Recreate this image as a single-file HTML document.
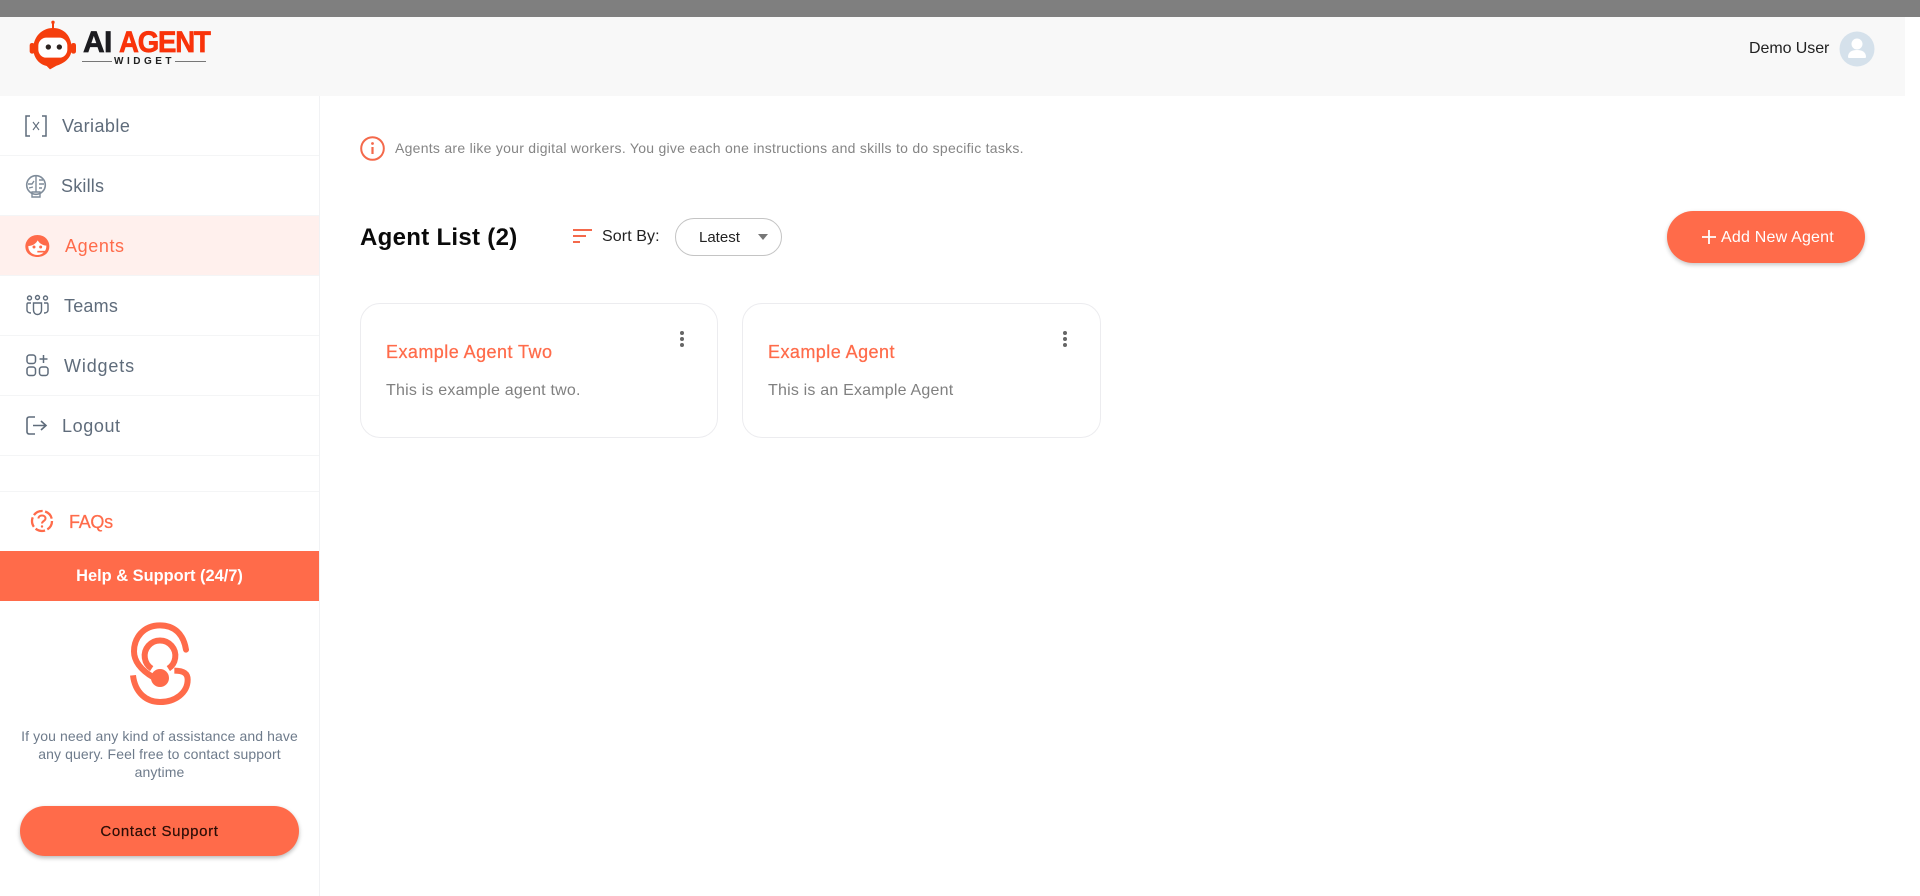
<!DOCTYPE html>
<html><head><meta charset="utf-8"><title>Agents</title>
<style>
html,body{margin:0;padding:0;width:1920px;height:896px;overflow:hidden;background:#fff}
body{font-family:"Liberation Sans",sans-serif;position:relative}
.a{position:absolute;white-space:nowrap}
.nav{font-size:18px;line-height:24px;color:#5f6c7b}
.line{position:absolute;left:0;width:319px;height:1px;background:#f4f5f6}
svg{position:absolute;overflow:visible}
.card{position:absolute;top:303px;width:356px;height:133px;border:1px solid #ececef;border-radius:20px;background:#fff}
.t{font-size:18px;line-height:24px;color:#ff6b4a;font-weight:500;letter-spacing:.45px;-webkit-text-stroke:.25px #ff6b4a}
.d{font-size:16px;line-height:22px;color:#808080;letter-spacing:.2px}
</style></head><body>
<div class="a" style="left:0;top:0;width:1920px;height:17px;background:#7f7f7f"></div>
<div class="a" style="left:0;top:17px;width:1905px;height:79px;background:#f8f8f8"></div>

<!-- logo -->
<svg style="left:25px;top:17px" width="60" height="55" viewBox="0 0 180 165">
<circle cx="84" cy="16" r="5" fill="#f53e0d"/><rect x="81" y="18" width="6" height="18" fill="#f53e0d"/>
<path d="M84 33C120 33 140 60 140 95C140 125 115 140 95 146L75 157L65 147C45 143 25 125 25 95C25 60 50 33 84 33z" fill="#f53e0d"/>
<rect x="14" y="78" width="15" height="32" rx="7" fill="#f53e0d"/><rect x="138" y="78" width="15" height="32" rx="7" fill="#f53e0d"/>
<rect x="40" y="62" width="87" height="60" rx="24" fill="#fff"/>
<circle cx="70" cy="90" r="8" fill="#2b2320"/><circle cx="103" cy="90" r="8" fill="#2b2320"/>
</svg>
<svg style="left:0;top:0" width="240" height="90" viewBox="0 0 240 90">
<rect x="82" y="61" width="30" height="1" fill="#777"/><rect x="175" y="61" width="31" height="1" fill="#777"/>
</svg>
<div class="a" style="left:83px;top:27px;font-size:30px;line-height:32px;font-weight:700;letter-spacing:-.7px;color:#1c1c20;-webkit-text-stroke:.7px #1c1c20">AI</div>
<div class="a" style="left:119px;top:27px;font-size:30px;line-height:32px;font-weight:700;letter-spacing:-1.3px;color:#f9330a;-webkit-text-stroke:.7px #f9330a;transform:scaleX(.92);transform-origin:0 50%">AGENT</div>
<div class="a" style="left:114px;top:56px;font-size:10px;line-height:12px;font-weight:700;letter-spacing:3.5px;color:#222">WIDGET</div>

<!-- user -->
<div class="a" style="left:1749px;top:38px;font-size:16px;line-height:22px;color:#222;letter-spacing:-.07px">Demo User</div>
<svg style="left:1839px;top:31px" width="36" height="36" viewBox="0 0 36 36">
<circle cx="18" cy="18" r="17.5" fill="#d5e1eb"/><circle cx="18" cy="13" r="5.5" fill="#fff"/>
<path d="M9 26c0-5 4-7 9-7s9 2 9 7c0 1-1 1-2 1H11c-1 0-2 0-2-1z" fill="#fff"/></svg>

<!-- sidebar -->
<div class="a" style="left:319px;top:96px;width:1px;height:800px;background:#f1f2f4"></div>
<div class="a" style="left:0;top:216px;width:319px;height:59px;background:#fff0ed"></div>
<div class="line" style="top:155px"></div><div class="line" style="top:215px"></div><div class="line" style="top:275px"></div><div class="line" style="top:335px"></div><div class="line" style="top:395px"></div><div class="line" style="top:455px"></div><div class="line" style="top:491px"></div>

<svg style="left:24px;top:114px" width="24" height="24" viewBox="0 0 24 24" fill="none" stroke="#5f6c7b" stroke-width="1.5">
<path d="M6 2H2v20h4M18 2h4v20h-4"/><path d="M9 8l6 8M15 8l-6 8" stroke-width="1.1"/></svg>
<div class="a nav" style="left:62px;top:114px;letter-spacing:.45px">Variable</div>

<svg style="left:25px;top:175px" width="22" height="23" viewBox="0 0 22 23" fill="none" stroke="#7f8c9a" stroke-width="1.6">
<circle cx="11" cy="10" r="9.300"/><path d="M11 1v16M7 17h8v5H7zM3 9h4l2-3M4 13l4-1M14 5h4M14 9h5M14 13h3" stroke-width="1.400"/></svg>
<div class="a nav" style="left:61px;top:174px;letter-spacing:.2px">Skills</div>

<svg style="left:25px;top:235px" width="25" height="22" viewBox="0 0 73 66">
<path d="M36 0C60 0 72 18 72 34C72 54 56 66 36 66C16 66 0 54 0 34C0 18 14 0 36 0z" fill="#ff6b4a"/>
<path d="M9 33C22 32 32 26 37 16C43 26 53 31 63 32C64 48 52 60 36 60C20 60 8 48 9 33z" fill="#fff"/>
<circle cx="26" cy="36" r="4.500" fill="#ff6b4a"/><circle cx="46" cy="36" r="4.500" fill="#ff6b4a"/>
<path d="M36 50H64" stroke="#ff6b4a" stroke-width="5" fill="none"/></svg>
<div class="a nav" style="left:65px;top:234px;color:#ff6b4a;letter-spacing:.6px">Agents</div>

<svg style="left:26px;top:295px" width="23" height="22" viewBox="0 0 23 22" fill="none" stroke="#5f6c7b" stroke-width="1.400">
<circle cx="3.500" cy="3" r="2"/><circle cx="11.500" cy="2.500" r="2"/><circle cx="19.500" cy="3" r="2"/>
<path d="M5 8H2C1 8 1 9 1 10v5c0 2 2 3 4 3M18 8h3c1 0 1 1 1 2v5c0 2-2 3-4 3M7.500 8h8v7c0 3-2 4.500-4 4.500s-4-1.500-4-4.500z"/></svg>
<div class="a nav" style="left:64px;top:294px;letter-spacing:.2px">Teams</div>

<svg style="left:26px;top:354px" width="23" height="23" viewBox="0 0 23 23" fill="none" stroke="#5f6c7b" stroke-width="1.500">
<rect x="1" y="1" width="8.500" height="8.500" rx="2.500"/><rect x="1" y="13" width="8.500" height="8.500" rx="2.500"/><rect x="13.500" y="13" width="8.500" height="8.500" rx="2.500"/><path d="M17.500 1v8M13.500 5h8"/></svg>
<div class="a nav" style="left:64px;top:354px;letter-spacing:.85px">Widgets</div>

<svg style="left:26px;top:416px" width="21" height="19" viewBox="0 0 21 19" fill="none" stroke="#5f6c7b" stroke-width="1.600">
<path d="M9 1H3C2 1 1 2 1 3v13c0 1 1 2 2 2h6M7 9.500h13M15 5l5 4.500-5 4.500"/></svg>
<div class="a nav" style="left:62px;top:414px;letter-spacing:.6px">Logout</div>

<svg style="left:30px;top:509px" width="24" height="24" viewBox="0 0 24 24" fill="none" stroke="#ff6b4a" stroke-width="2.300">
<circle cx="12" cy="12" r="10" stroke-dasharray="10 2.500"/><path d="M8.500 9.500c0-2 1.500-3 3.500-3s3.500 1 3.500 3c0 2.500-3.500 2.500-3.500 5" stroke-width="2"/><circle cx="12" cy="17.500" r="1.200" fill="#ff6b4a" stroke="none"/></svg>
<div class="a" style="left:69px;top:510px;font-size:18px;line-height:24px;color:#ff6b4a;letter-spacing:-.3px;-webkit-text-stroke:.25px #ff6b4a">FAQs</div>

<div class="a" style="left:0;top:551px;width:319px;height:50px;background:#ff6b4a;color:#fff;text-align:center;font-size:16.400px;font-weight:700;line-height:51px">Help &amp; Support (24/7)</div>

<svg style="left:125px;top:618px" width="70" height="90" viewBox="0 0 210 270" fill="none" stroke="#ff6b4a" stroke-width="18" stroke-linecap="round">
<path d="M183 95C175 45 145 22 105 22C55 22 27 60 27 100C27 135 55 160 85 178"/>
<path d="M80 152A46 46 0 1 1 130 152" stroke-linecap="butt"/>
<path d="M24 172C30 225 65 252 105 252C150 252 188 225 188 185C188 165 175 158 148 158" stroke-linecap="butt"/>
<circle cx="105" cy="180" r="27" fill="#ff6b4a" stroke="none"/></svg>

<div class="a" style="left:0;width:319px;top:727px;text-align:center;font-size:14px;line-height:18px;color:#6e7b8b;letter-spacing:.1px">If you need any kind of assistance and have<br>any query. Feel free to contact support<br>anytime</div>

<div class="a" style="left:20px;top:806px;width:279px;height:50px;border-radius:25px;background:#ff6b4a;box-shadow:0 2px 4px rgba(0,0,0,.28);text-align:center;line-height:51px;font-size:15px;letter-spacing:.65px;color:#2a0d06;-webkit-text-stroke:.2px #2a0d06">Contact Support</div>

<!-- main -->
<svg style="left:360px;top:136px" width="25" height="25" viewBox="0 0 25 25" fill="none">
<circle cx="12.500" cy="12.500" r="11.300" stroke="#f4694b" stroke-width="2"/><path d="M12.500 11v7" stroke="#f4694b" stroke-width="2.200"/><circle cx="12.500" cy="7.500" r="1.400" fill="#f4694b"/></svg>
<div class="a" style="left:395px;top:138px;font-size:14px;line-height:20px;color:#858585;letter-spacing:.27px">Agents are like your digital workers. You give each one instructions and skills to do specific tasks.</div>

<div class="a" style="left:360px;top:223px;font-size:24px;line-height:30px;font-weight:700;color:#0a0a0a;letter-spacing:.3px">Agent List (2)</div>
<svg style="left:573px;top:229px" width="20" height="14" viewBox="0 0 20 14" fill="#f4694b"><rect y="0" width="19" height="2"/><rect y="6" width="13" height="2"/><rect y="12" width="7" height="2"/></svg>
<div class="a" style="left:602px;top:226px;font-size:16px;line-height:22px;color:#222;letter-spacing:.1px">Sort By:</div>
<div class="a" style="left:675px;top:218px;width:105px;height:36px;border:1px solid #c4c4c4;border-radius:19px;background:#fff"></div>
<div class="a" style="left:699px;top:227px;font-size:15px;line-height:22px;color:#222">Latest</div>
<svg style="left:758px;top:234px" width="10" height="6" viewBox="0 0 10 6"><path d="M0 0h10L5 6z" fill="#777"/></svg>

<div class="a" style="left:1667px;top:211px;width:198px;height:52px;border-radius:26px;background:#ff6b4a;box-shadow:0 2px 4px rgba(0,0,0,.22)"></div>
<svg style="left:1702px;top:230px" width="14" height="14" viewBox="0 0 14 14" stroke="#fff" stroke-width="1.800"><path d="M7 0v14M0 7h14"/></svg>
<div class="a" style="left:1721px;top:227px;font-size:16px;line-height:22px;color:#fff;letter-spacing:.2px">Add New Agent</div>

<div class="card" style="left:360px"></div>
<div class="card" style="left:742px;width:357px"></div>
<div class="a t" style="left:386px;top:340px">Example Agent Two</div>
<div class="a d" style="left:386px;top:380px">This is example agent two.</div>
<div class="a t" style="left:768px;top:340px">Example Agent</div>
<div class="a d" style="left:768px;top:380px">This is an Example Agent</div>
<svg style="left:678px;top:330px" width="8" height="18" viewBox="0 0 8 18" fill="#666"><circle cx="4" cy="3" r="2"/><circle cx="4" cy="9" r="2"/><circle cx="4" cy="15" r="2"/></svg>
<svg style="left:1061px;top:330px" width="8" height="18" viewBox="0 0 8 18" fill="#666"><circle cx="4" cy="3" r="2"/><circle cx="4" cy="9" r="2"/><circle cx="4" cy="15" r="2"/></svg>
</body></html>
